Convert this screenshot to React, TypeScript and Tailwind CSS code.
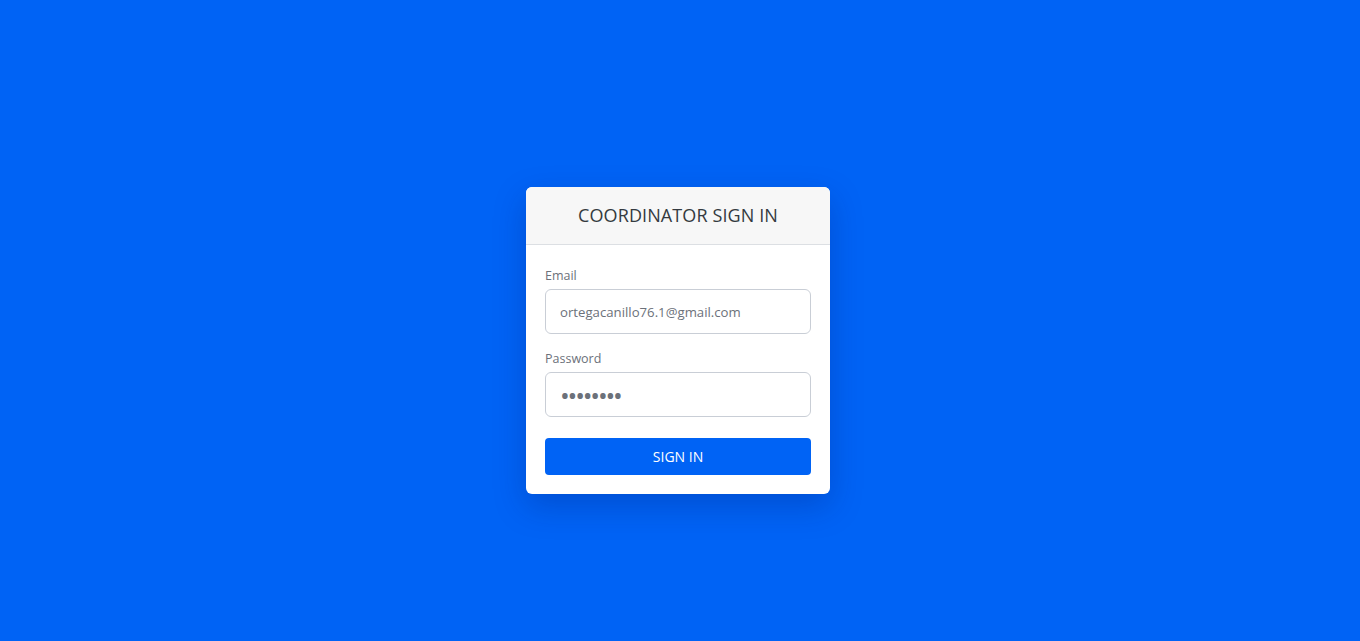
export default function App() {
  return (
    <div className="min-h-screen bg-[#0063f5] flex items-center justify-center pt-10 pr-1 font-['Open_Sans',sans-serif]">

      {/* Sign-in card */}
      <div className="w-[304px] bg-white rounded-md overflow-hidden shadow-[0_12px_32px_rgba(0,30,120,0.28)]">

        <div className="h-[58px] bg-[#f7f7f7] border-b border-[#dcdfe3] flex items-center justify-center">
          <h1 className="text-[18px] text-[#343a40] tracking-[0.1px]">COORDINATOR SIGN IN</h1>
        </div>

        <form className="px-[19px] pt-[21px] pb-[19px]" onSubmit={e => e.preventDefault()}>

          <label className="block text-[12.5px] leading-[20px] text-[#6c717a] mb-[3px]">Email</label>
          <input
            type="email"
            readOnly
            defaultValue="ortegacanillo76.1@gmail.com"
            className="w-full h-[45px] px-[14px] rounded-md border border-[#c9ced6] text-[13.2px] text-[#6c717a] outline-none"
          />

          <label className="block text-[12.5px] leading-[20px] text-[#6c717a] mt-[15px] mb-[3px]">Password</label>
          <input
            type="password"
            readOnly
            defaultValue="12345678"
            className="w-full h-[45px] px-[14px] rounded-md border border-[#c9ced6] text-[26px] tracking-[-2.2px] text-[#6c717a] outline-none"
          />

          <button
            type="submit"
            className="w-full h-[37px] mt-[21px] rounded bg-[#0063f5] text-white text-[14px]"
          >
            SIGN IN
          </button>

        </form>

      </div>

    </div>
  )
}
